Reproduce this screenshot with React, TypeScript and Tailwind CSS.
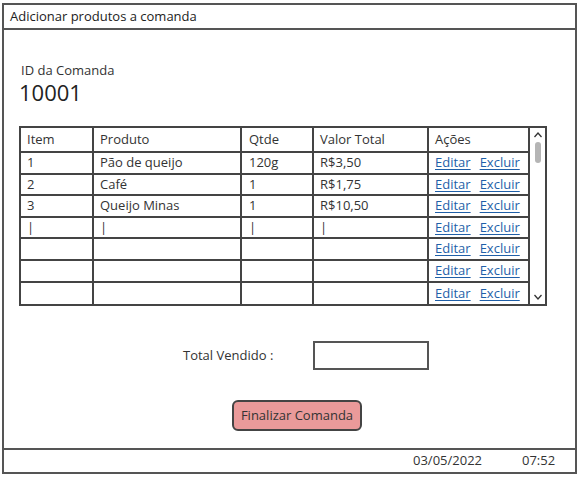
import React from 'react'

const font = { fontFamily: '"Open Sans", "Liberation Sans", sans-serif' }

const rows = [
  { item: '1', produto: 'Pão de queijo', qtde: '120g', valor: 'R$3,50' },
  { item: '2', produto: 'Café', qtde: '1', valor: 'R$1,75' },
  { item: '3', produto: 'Queijo Minas', qtde: '1', valor: 'R$10,50' },
  { item: '|', produto: '|', qtde: '|', valor: '|' },
  { item: '', produto: '', qtde: '', valor: '' },
  { item: '', produto: '', qtde: '', valor: '' },
  { item: '', produto: '', qtde: '', valor: '' },
]

const cols = 'grid grid-cols-[73px_148px_72px_115px_99px]'

function Scrollbar() {
  return (
    <div className="w-[17px] border-2 border-l-0 border-[#444] flex flex-col items-center justify-between py-[2px]">
      <div>
        <svg width="10" height="8" viewBox="0 0 10 8" className="mt-[1px]">
          <path d="M1.5 6 L5 2 L8.5 6" stroke="#333" strokeWidth="1.3" fill="none" />
        </svg>
        <div className="mx-auto mt-[3px] w-[6px] h-[21px] rounded-full bg-[#b5b5b5]" />
      </div>
      <svg width="10" height="8" viewBox="0 0 10 8" className="mb-[1px]">
        <path d="M1.5 2 L5 6 L8.5 2" stroke="#333" strokeWidth="1.3" fill="none" />
      </svg>
    </div>
  )
}

export default function App() {
  return (
    <div className="w-[579px] h-[477px] bg-white pt-[3px] pl-[2px] text-[#333]" style={font}>
      <div className="w-[575px] h-[471px] border-2 border-[#555] flex flex-col">
        <div className="h-[25px] border-b-2 border-[#555] flex items-center pl-[6px] text-[13px] text-[#222]">
          Adicionar produtos a comanda
        </div>

        <div className="flex-1 flex flex-col pl-[15px]">
          <div className="mt-[32px] text-[13px] leading-[16px] pl-[2px]">ID da Comanda</div>
          <div className="mt-[2px] text-[22px] leading-[24px] text-[#222]">10001</div>

          <div className="mt-[22px] flex">
            <div className="border-2 border-[#444]">
              <div className={`${cols} h-[25px] border-b-2 border-[#444] text-[13px]`}>
                <div className="pl-[6px] flex items-center border-r-2 border-[#444]">Item</div>
                <div className="pl-[6px] flex items-center border-r-2 border-[#444]">Produto</div>
                <div className="pl-[7px] flex items-center border-r-2 border-[#444]">Qtde</div>
                <div className="pl-[6px] flex items-center border-r-2 border-[#444]">Valor Total</div>
                <div className="pl-[6px] flex items-center">Ações</div>
              </div>
              {rows.map((r, i) => (
                <div
                  key={i}
                  className={`${cols} h-[21.6px] text-[13px] ${i < rows.length - 1 ? 'border-b-2 border-[#444]' : ''}`}
                >
                  <div className="pl-[6px] flex items-center border-r-2 border-[#444]">{r.item}</div>
                  <div className="pl-[6px] flex items-center border-r-2 border-[#444]">{r.produto}</div>
                  <div className="pl-[7px] flex items-center border-r-2 border-[#444]">{r.qtde}</div>
                  <div className="pl-[6px] flex items-center border-r-2 border-[#444]">{r.valor}</div>
                  <div className="pl-[6px] flex items-center gap-[9px] text-[#1f5fa8]">
                    <span className="underline underline-offset-2">Editar</span>
                    <span className="underline underline-offset-2">Excluir</span>
                  </div>
                </div>
              ))}
            </div>
            <Scrollbar />
          </div>

          <div className="mt-[35px] flex items-center">
            <div className="ml-[164px] text-[13px]">Total Vendido :</div>
            <div className="ml-[40px] w-[116px] h-[29px] border-2 border-[#555]" />
          </div>

          <div className="mt-[30px] flex">
            <div className="ml-[213px] w-[130px] h-[31px] rounded-[6px] border-2 border-[#444] bg-[#ea9a9a] flex items-center justify-center text-[13px] text-[#333]">
              Finalizar Comanda
            </div>
          </div>
        </div>

        <div className="h-[24px] border-t-2 border-[#555] flex items-center text-[13px] text-[#333]">
          <span className="ml-[409px]">03/05/2022</span>
          <span className="ml-[40px]">07:52</span>
        </div>
      </div>
    </div>
  )
}
